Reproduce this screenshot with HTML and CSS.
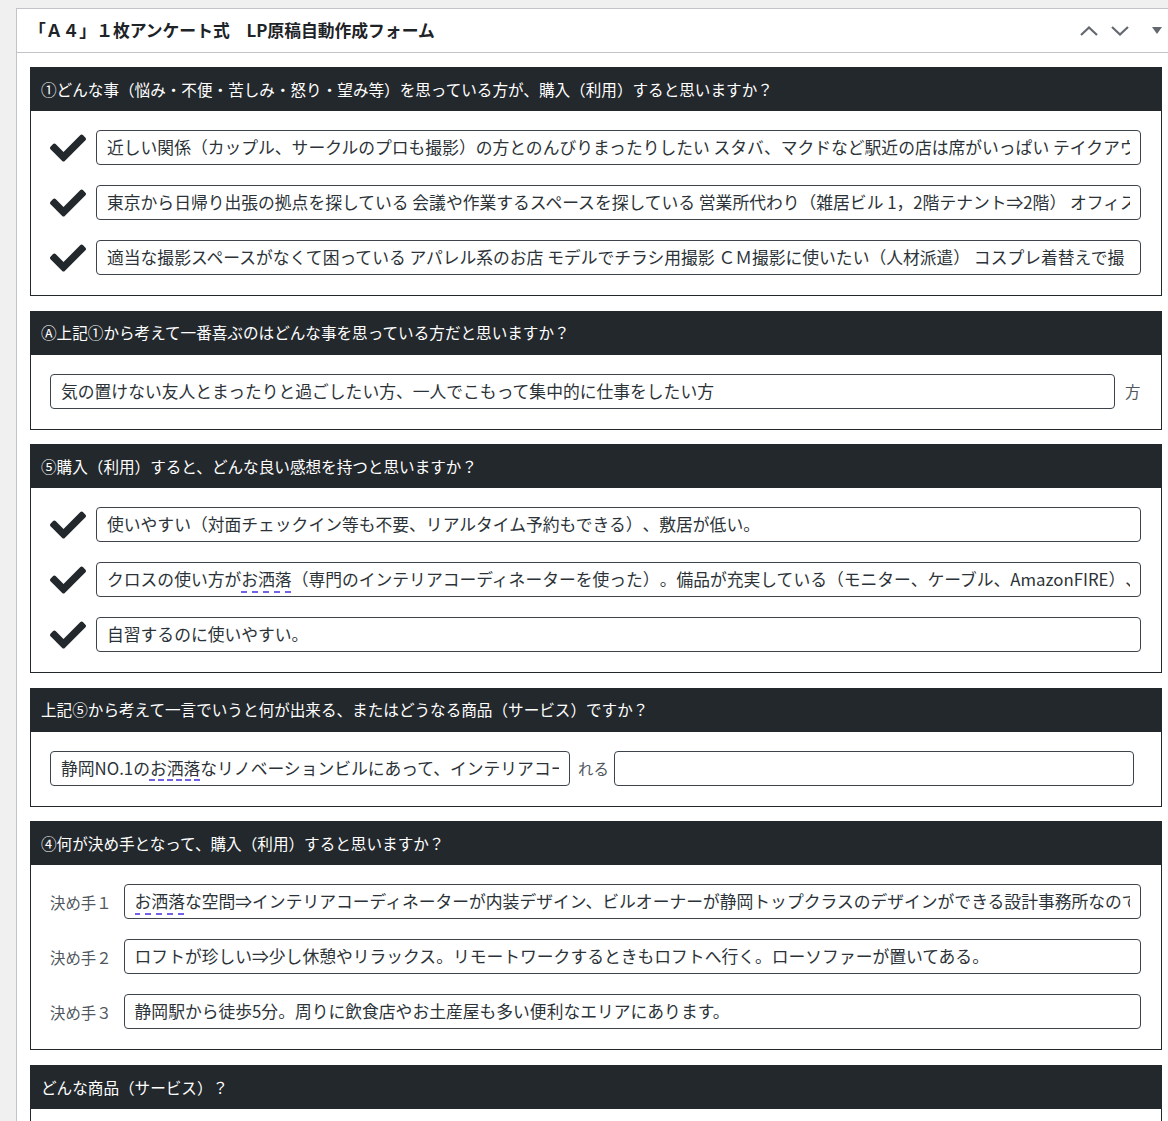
FILE: index.html
```html
<!DOCTYPE html>
<html lang="ja">
<head>
    <meta charset="UTF-8">
    <meta name="viewport" content="width=device-width, initial-scale=1.0">
    <title>LP原稿自動作成フォーム</title>
    <link rel="stylesheet" href="styles.css">
</head>
<body>
    <div class="postbox">
        <div class="postbox-header">
            <h2 class="postbox-title">「Ａ４」１枚アンケート式　LP原稿自動作成フォーム</h2>
            <div class="handle-actions">
                <button class="handle handle-up" aria-label="上へ移動">
                    <svg width="18" height="10" viewBox="0 0 18 10"><path d="M1 9 L9 1.5 L17 9" fill="none" stroke="#646970" stroke-width="2.2"/></svg>
                </button>
                <button class="handle handle-down" aria-label="下へ移動">
                    <svg width="18" height="10" viewBox="0 0 18 10"><path d="M1 1 L9 8.5 L17 1" fill="none" stroke="#646970" stroke-width="2.2"/></svg>
                </button>
                <button class="handle handle-toggle" aria-label="パネルを切り替え">
                    <svg width="10" height="7" viewBox="0 0 10 7"><path d="M0 0 H10 L5 7 Z" fill="#646970"/></svg>
                </button>
            </div>
        </div>

        <div class="inside">
            <section class="q">
                <h3 class="q-head">①どんな事（悩み・不便・苦しみ・怒り・望み等）を思っている方が、購入（利用）すると思いますか？</h3>
                <div class="q-body">
                    <div class="row">
                        <svg class="check" viewBox="0 64 512 384"><path d="M173.9 439.4l-166.4-166.4c-10-10-10-26.2 0-36.2l36.2-36.2c10-10 26.2-10 36.2 0L192 312.7 432.1 72.6c10-10 26.2-10 36.2 0l36.2 36.2c10 10 10 26.2 0 36.2l-294.4 294.4c-10 10-26.2 10-36.2 0z"/></svg>
                        <div class="field"><div class="val">近しい関係（カップル、サークルのプロも撮影）の方とのんびりまったりしたい スタバ、マクドなど駅近の店は席がいっぱい テイクアウ</div></div>
                    </div>
                    <div class="row">
                        <svg class="check" viewBox="0 64 512 384"><path d="M173.9 439.4l-166.4-166.4c-10-10-10-26.2 0-36.2l36.2-36.2c10-10 26.2-10 36.2 0L192 312.7 432.1 72.6c10-10 26.2-10 36.2 0l36.2 36.2c10 10 10 26.2 0 36.2l-294.4 294.4c-10 10-26.2 10-36.2 0z"/></svg>
                        <div class="field"><div class="val">東京から日帰り出張の拠点を探している 会議や作業するスペースを探している 営業所代わり（雑居ビル 1，2階テナント⇒2階） オフィス</div></div>
                    </div>
                    <div class="row">
                        <svg class="check" viewBox="0 64 512 384"><path d="M173.9 439.4l-166.4-166.4c-10-10-10-26.2 0-36.2l36.2-36.2c10-10 26.2-10 36.2 0L192 312.7 432.1 72.6c10-10 26.2-10 36.2 0l36.2 36.2c10 10 10 26.2 0 36.2l-294.4 294.4c-10 10-26.2 10-36.2 0z"/></svg>
                        <div class="field"><div class="val">適当な撮影スペースがなくて困っている アパレル系のお店 モデルでチラシ用撮影 ＣＭ撮影に使いたい（人材派遣） コスプレ着替えで撮</div></div>
                    </div>
                </div>
            </section>

            <section class="q">
                <h3 class="q-head">Ⓐ上記①から考えて一番喜ぶのはどんな事を思っている方だと思いますか？</h3>
                <div class="q-body">
                    <div class="row">
                        <div class="field"><div class="val">気の置けない友人とまったりと過ごしたい方、一人でこもって集中的に仕事をしたい方</div></div>
                        <span class="suffix">方</span>
                    </div>
                </div>
            </section>

            <section class="q">
                <h3 class="q-head">⑤購入（利用）すると、どんな良い感想を持つと思いますか？</h3>
                <div class="q-body">
                    <div class="row">
                        <svg class="check" viewBox="0 64 512 384"><path d="M173.9 439.4l-166.4-166.4c-10-10-10-26.2 0-36.2l36.2-36.2c10-10 26.2-10 36.2 0L192 312.7 432.1 72.6c10-10 26.2-10 36.2 0l36.2 36.2c10 10 10 26.2 0 36.2l-294.4 294.4c-10 10-26.2 10-36.2 0z"/></svg>
                        <div class="field"><div class="val">使いやすい（対面チェックイン等も不要、リアルタイム予約もできる）、敷居が低い。</div></div>
                    </div>
                    <div class="row">
                        <svg class="check" viewBox="0 64 512 384"><path d="M173.9 439.4l-166.4-166.4c-10-10-10-26.2 0-36.2l36.2-36.2c10-10 26.2-10 36.2 0L192 312.7 432.1 72.6c10-10 26.2-10 36.2 0l36.2 36.2c10 10 10 26.2 0 36.2l-294.4 294.4c-10 10-26.2 10-36.2 0z"/></svg>
                        <div class="field"><div class="val">クロスの使い方が<span class="spell">お洒落</span>（専門のインテリアコーディネーターを使った）。備品が充実している（モニター、ケーブル、AmazonFIRE）、</div></div>
                    </div>
                    <div class="row">
                        <svg class="check" viewBox="0 64 512 384"><path d="M173.9 439.4l-166.4-166.4c-10-10-10-26.2 0-36.2l36.2-36.2c10-10 26.2-10 36.2 0L192 312.7 432.1 72.6c10-10 26.2-10 36.2 0l36.2 36.2c10 10 10 26.2 0 36.2l-294.4 294.4c-10 10-26.2 10-36.2 0z"/></svg>
                        <div class="field"><div class="val">自習するのに使いやすい。</div></div>
                    </div>
                </div>
            </section>

            <section class="q">
                <h3 class="q-head">上記⑤から考えて一言でいうと何が出来る、またはどうなる商品（サービス）ですか？</h3>
                <div class="q-body">
                    <div class="row">
                        <div class="field field-half"><div class="val">静岡NO.1の<span class="spell">お洒落</span>なリノベーションビルにあって、インテリアコー</div></div>
                        <span class="suffix suffix-mid">れる</span>
                        <div class="field field-half"><div class="val"></div></div>
                    </div>
                </div>
            </section>

            <section class="q">
                <h3 class="q-head">④何が決め手となって、購入（利用）すると思いますか？</h3>
                <div class="q-body">
                    <div class="row row-label">
                        <span class="label">決め手１</span>
                        <div class="field"><div class="val"><span class="spell">お洒落</span>な空間⇒インテリアコーディネーターが内装デザイン、ビルオーナーが静岡トップクラスのデザインができる設計事務所なので</div></div>
                    </div>
                    <div class="row row-label">
                        <span class="label">決め手２</span>
                        <div class="field"><div class="val">ロフトが珍しい⇒少し休憩やリラックス。リモートワークするときもロフトへ行く。ローソファーが置いてある。</div></div>
                    </div>
                    <div class="row row-label">
                        <span class="label">決め手３</span>
                        <div class="field"><div class="val">静岡駅から徒歩5分。周りに飲食店やお土産屋も多い便利なエリアにあります。</div></div>
                    </div>
                </div>
            </section>

            <section class="q">
                <h3 class="q-head">どんな商品（サービス）？</h3>
                <div class="q-body q-body-empty"></div>
            </section>
        </div>
    </div>
</body>
</html>
```

FILE: styles.css
```css
html,
body {
    overflow: hidden;
}

body {
    margin: 0;
    padding: 8px 0 0 16px;
    background-color: #f0f0f1;
    font-family: "Noto Sans CJK JP", "Liberation Sans", sans-serif;
    color: #2c3338;
    text-spacing-trim: space-all;
}

.postbox {
    width: 1158px;
    background-color: #fff;
    border: 1px solid #c3c4c7;
}

.postbox-header {
    display: flex;
    align-items: center;
    height: 43px;
    padding: 0 13px 0 12px;
    border-bottom: 1px solid #c3c4c7;
}

.postbox-title {
    flex: 1;
    margin: 0;
    font-size: 16.8px;
    font-weight: 700;
    line-height: 1;
    color: #1d2327;
}

.handle-actions {
    display: flex;
    align-items: center;
}

.handle {
    display: flex;
    align-items: center;
    padding: 0;
    border: none;
    background: none;
    cursor: pointer;
}

.handle-down {
    margin-left: 13px;
}

.handle-toggle {
    margin-left: 23px;
}

.inside {
    padding: 14px 13px 0;
}

.q {
    border: 1px solid #23282d;
    margin-bottom: 14.6px;
}

.q-head {
    display: flex;
    align-items: center;
    height: 43px;
    margin: 0;
    padding: 0 10px;
    background-color: #23282d;
    color: #fff;
    font-size: 15.6px;
    font-weight: 400;
    line-height: 1;
}

.q-body {
    display: flex;
    flex-direction: column;
    gap: 20px;
    padding: 19px 20px 20px 19px;
}

.q-body-empty {
    height: 60px;
}

.row {
    display: flex;
    align-items: center;
    gap: 10px;
    height: 35px;
}

.check {
    flex: none;
    width: 36px;
    height: 28px;
    fill: #23282d;
}

.field {
    flex: 1;
    min-width: 0;
    height: 35px;
    box-sizing: border-box;
    padding: 0 10px;
    border: 1px solid #3c434a;
    border-radius: 4px;
    background-color: #fff;
    font-size: 16.8px;
    line-height: 33px;
    color: #2c3338;
}

.val {
    overflow: hidden;
    white-space: nowrap;
}

.field-half {
    flex: none;
    width: 520px;
}

.spell {
    text-decoration: underline dashed #7163e8;
    text-decoration-thickness: 2px;
    text-underline-offset: 5px;
}

.suffix {
    font-size: 15.4px;
    color: #50575e;
    width: 16px;
}

.suffix-mid {
    width: auto;
    margin: 0 -5px 0 -2px;
}

.row-label {
    gap: 12px;
}

.label {
    flex: none;
    font-size: 15.4px;
    color: #50575e;
}
```
